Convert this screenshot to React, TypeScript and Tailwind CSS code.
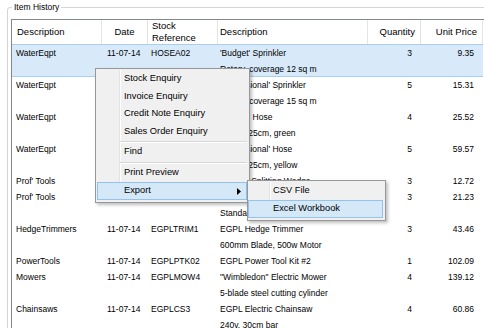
import React from "react";

type Row = {
  c: string;
  d: string;
  s: string;
  l1: string;
  l2?: string;
  q: string;
  p: string;
  sel?: boolean;
};

const rows: Row[] = [
  { c: "WaterEqpt", d: "11-07-14", s: "HOSEA02", l1: "'Budget' Sprinkler", l2: "Rotary, coverage 12 sq m", q: "3", p: "9.35", sel: true },
  { c: "WaterEqpt", d: "11-07-14", s: "HOSEA03", l1: "'Professional' Sprinkler", l2: "Rotary, coverage 15 sq m", q: "5", p: "15.31" },
  { c: "WaterEqpt", d: "11-07-14", s: "HOSEB01", l1: "'Budget' Hose", l2: "20m, 1.25cm, green", q: "4", p: "25.52" },
  { c: "WaterEqpt", d: "11-07-14", s: "HOSEB02", l1: "'Professional' Hose", l2: "30m, 1.25cm, yellow", q: "5", p: "59.57" },
  { c: "Prof' Tools", d: "11-07-14", s: "PTWEDGE1", l1: "Twisted Splitting Wedge", q: "3", p: "12.72" },
  { c: "Prof' Tools", d: "11-07-14", s: "PTAXE02", l1: "Felling Axe", l2: "Standard 3lb head", q: "3", p: "21.23" },
  { c: "HedgeTrimmers", d: "11-07-14", s: "EGPLTRIM1", l1: "EGPL Hedge Trimmer", l2: "600mm Blade, 500w Motor", q: "3", p: "43.46" },
  { c: "PowerTools", d: "11-07-14", s: "EGPLPTK02", l1: "EGPL Power Tool Kit #2", q: "1", p: "102.09" },
  { c: "Mowers", d: "11-07-14", s: "EGPLMOW4", l1: "\"Wimbledon\" Electric Mower", l2: "5-blade steel cutting cylinder", q: "4", p: "139.12" },
  { c: "Chainsaws", d: "11-07-14", s: "EGPLCS3", l1: "EGPL Electric Chainsaw", l2: "240v, 30cm bar", q: "4", p: "60.86" },
];

function Arrow() {
  return (
    <svg width="4" height="7" viewBox="0 0 4 7" className="block">
      <path d="M0 0 L4 3.5 L0 7 Z" fill="#000" />
    </svg>
  );
}

function MenuItem({ label, h = 18, arrow = false, hot = false }: { label: string; h?: number; arrow?: boolean; hot?: boolean }) {
  if (hot) {
    return (
      <div className="flex items-center box-border border border-[#91c3ec] bg-[#d5e8f8]" style={{ height: h }}>
        <div className="w-[23px] shrink-0" />
        <span className="pl-[3px] whitespace-nowrap">{label}</span>
        {arrow && (
          <span className="ml-auto mr-[5px]">
            <Arrow />
          </span>
        )}
      </div>
    );
  }
  return (
    <div className="flex items-center" style={{ height: h }}>
      <div className="w-[23px] shrink-0 self-stretch border-r border-[#e2e3e3]" />
      <div className="w-px shrink-0 self-stretch bg-white" />
      <span className="pl-[3px] whitespace-nowrap">{label}</span>
      {arrow && (
        <span className="ml-auto mr-[6px]">
          <Arrow />
        </span>
      )}
    </div>
  );
}

function MenuSep({ h }: { h: number }) {
  return (
    <div className="flex" style={{ height: h }}>
      <div className="w-[23px] shrink-0 self-stretch border-r border-[#e2e3e3]" />
      <div className="flex-1 flex flex-col justify-center">
        <div className="h-px bg-[#d7d7d7]" />
        <div className="h-px bg-white" />
      </div>
    </div>
  );
}

export default function App() {
  return (
    <div className="relative w-[484px] h-[328px] overflow-hidden bg-white text-black font-['Liberation_Sans',Arial,sans-serif]">
      {/* Group box */}
      <div className="relative mt-[7px] ml-[7px] w-[490px] h-[330px] border border-[#d5d5d5] rounded-[3px] pt-[11px] pl-[3px] box-border">
        <span className="absolute left-[4px] top-[-8px] bg-white px-[2px] text-[8.5px] leading-[14px]">Item History</span>

        {/* Grid */}
        <div className="w-[480px] h-[320px] border border-[#828790] bg-white box-border">
          {/* Header */}
          <div className="flex h-[24px] text-[9.5px]">
            <div className="w-[90px] border-r border-[#e5e5e5] pl-[5px] flex items-center">Description</div>
            <div className="w-[46px] border-r border-[#e5e5e5] flex items-center justify-center">Date</div>
            <div className="w-[70px] border-r border-[#e5e5e5] pl-[4px] flex flex-col justify-center leading-[12px]">
              <span>Stock</span>
              <span>Reference</span>
            </div>
            <div className="w-[150px] border-r border-[#e5e5e5] pl-[2px] flex items-center">Description</div>
            <div className="w-[53px] border-r border-[#e5e5e5] pr-[5px] flex items-center justify-end">Quantity</div>
            <div className="w-[62px] border-r border-[#e5e5e5] pr-[5px] flex items-center justify-end">Unit Price</div>
          </div>

          {/* Body */}
          <div className="text-[8.5px] leading-[16px]">
            {rows.map((r, i) => (
              <div
                key={i}
                className={
                  "flex w-[471px] " +
                  (r.sel ? "bg-[#d8eaf9] shadow-[inset_0_1px_0_#a9cff0,inset_0_-1px_0_#a9cff0] pt-[1px]" : "")
                }
              >
                <div className="w-[90px] pl-[4px] whitespace-nowrap">{r.c}</div>
                <div className="w-[46px] pl-[5px] whitespace-nowrap">{r.d}</div>
                <div className="w-[70px] pl-[3px] whitespace-nowrap">{r.s}</div>
                <div className="w-[150px] pl-[2px] whitespace-nowrap flex flex-col">
                  <span>{r.l1}</span>
                  {r.l2 && <span>{r.l2}</span>}
                </div>
                <div className="w-[53px] pr-[9px] text-right">{r.q}</div>
                <div className="w-[62px] pr-[9px] text-right">{r.p}</div>
              </div>
            ))}
          </div>
        </div>
      </div>

      {/* Context menu */}
      <div className="absolute left-[95px] top-[68px] w-[155px] box-border border border-[#979797] bg-[#f0f0f0] pl-[1px] pr-[2px] pt-[1px] pb-[2px] text-[9.3px] shadow-[2px_2px_3px_rgba(0,0,0,0.25)]">
        <MenuItem label="Stock Enquiry" />
        <MenuItem label="Invoice Enquiry" h={17} />
        <MenuItem label="Credit Note Enquiry" />
        <MenuItem label="Sales Order Enquiry" />
        <MenuSep h={2} />
        <MenuItem label="Find" />
        <MenuSep h={3} />
        <MenuItem label="Print Preview" />
        <MenuItem label="Export" arrow hot />
      </div>

      {/* Submenu */}
      <div className="absolute left-[247px] top-[180px] w-[139px] box-border border border-[#979797] bg-[#f0f0f0] pr-[2px] pt-[1px] pb-[2px] text-[9.3px] shadow-[2px_2px_3px_rgba(0,0,0,0.25)]">
        <div className="flex items-center h-[18px]">
          <div className="w-[22px] shrink-0 self-stretch border-r border-[#e2e3e3]" />
          <div className="w-px shrink-0 self-stretch bg-white" />
          <span className="pl-[2px] whitespace-nowrap">CSV File</span>
        </div>
        <div className="flex items-center h-[18px] box-border border border-[#91c3ec] bg-[#d5e8f8]">
          <div className="w-[22px] shrink-0" />
          <span className="pl-[2px] whitespace-nowrap">Excel Workbook</span>
        </div>
      </div>
    </div>
  );
}
